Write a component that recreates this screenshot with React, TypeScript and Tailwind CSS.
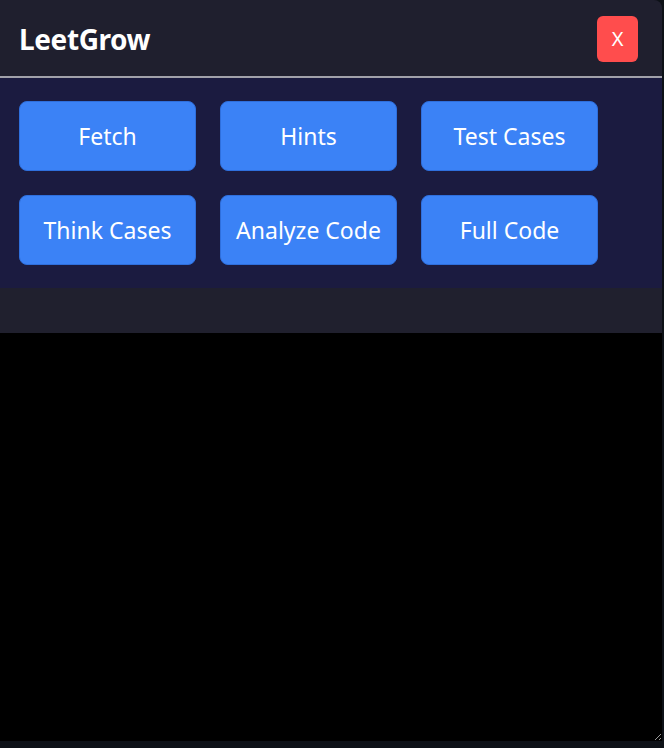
import React from 'react'

const actions = ['Fetch', 'Hints', 'Test Cases', 'Think Cases', 'Analyze Code', 'Full Code']

const App = () => {
  return (
    <div className="h-[748px] w-[664px] bg-[#0d1117] font-['Noto_Sans',sans-serif]">
      <div className="flex w-[662px] flex-col overflow-hidden rounded-tr-lg">
        {/* header */}
        <div className="flex h-[78px] items-center justify-between border-b-2 border-[#a1a1aa] bg-[#1f1f2e] pl-[19px] pr-[24px]">
          <h1 className="mt-[2px] text-[28px] font-bold tracking-[-0.4px] text-white">LeetGrow</h1>
          <button className="mt-[2px] h-[46px] w-[41px] rounded-md bg-[#ff4d4d] text-[20px] text-white">X</button>
        </div>

        <div className="grid grid-cols-[177px_177px_177px] gap-6 bg-[#1b1b40] px-[19px] py-[23px]">
          {actions.map((a) => (
            <button
              key={a}
              className="h-[70px] rounded-lg border border-[#2f6fdc] bg-[#3b82f6] text-[23px] text-white"
            >
              {a}
            </button>
          ))}
        </div>

        <div className="h-[45px] bg-[#20202e]"></div>

        <textarea className="block h-[408px] w-full resize-y border-0 bg-black text-white outline-none [color-scheme:dark]"></textarea>
      </div>
    </div>
  )
}

export default App
